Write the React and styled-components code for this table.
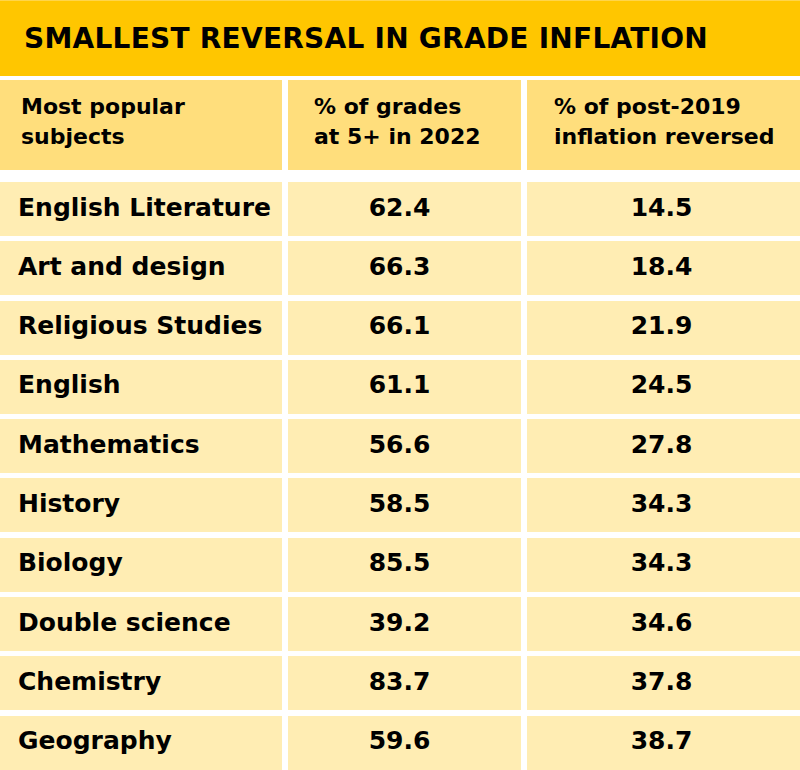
import React from 'react'
import styled, { createGlobalStyle } from 'styled-components'

const titleYellow = '#ffc600'
const headYellow = '#ffde7c'
const bodyYellow = '#ffedb3'

const GlobalStyle = createGlobalStyle`
  html, body {
    margin: 0;
    padding: 0;
    background: #ffffff;
  }
  body {
    font-family: "DejaVu Sans", "Open Sans", sans-serif;
    color: #000000;
  }
`

const Page = styled.div`
  width: 800px;
`

const TitleBar = styled.div`
  height: 76px;
  background: ${titleYellow};
  border-top: 1px solid #ffd54a;
  box-sizing: border-box;
  display: flex;
  align-items: center;
  padding-left: 24px;
  margin-bottom: 4px;
`

const Title = styled.h1`
  margin: 0;
  font-size: 28px;
  font-weight: 700;
  letter-spacing: 0.25px;
  text-transform: uppercase;
`

const Columns = styled.div`
  display: grid;
  grid-template-columns: 282px 233px 273px;
  column-gap: 6px;
`

const HeadRow = styled(Columns)`
  height: 90px;
  margin-bottom: 12px;
`

const BodyRows = styled(Columns)`
  grid-auto-rows: 54px;
  row-gap: 5.3px;
`

const HeadCell = styled.div`
  background: ${headYellow};
  display: flex;
  align-items: center;
  padding-left: ${p => p.pad}px;
  padding-bottom: 7px;
  font-size: 22px;
  font-weight: 700;
  line-height: 30px;
`

const Cell = styled.div`
  background: ${bodyYellow};
  display: flex;
  align-items: center;
  justify-content: ${p => (p.shift !== undefined ? 'center' : 'flex-start')};
  padding-left: ${p => (p.shift !== undefined ? 0 : 18)}px;
  padding-right: ${p => p.shift || 0}px;
  padding-bottom: 4px;
  font-size: 25px;
  font-weight: 700;
`

const rows = [
  ['English Literature', '62.4', '14.5'],
  ['Art and design', '66.3', '18.4'],
  ['Religious Studies', '66.1', '21.9'],
  ['English', '61.1', '24.5'],
  ['Mathematics', '56.6', '27.8'],
  ['History', '58.5', '34.3'],
  ['Biology', '85.5', '34.3'],
  ['Double science', '39.2', '34.6'],
  ['Chemistry', '83.7', '37.8'],
  ['Geography', '59.6', '38.7']
]

export default function App () {
  return (
    <Page>
      <GlobalStyle />
      <TitleBar>
        <Title>Smallest reversal in grade inflation</Title>
      </TitleBar>
      <HeadRow>
        <HeadCell pad={21}>Most popular<br />subjects</HeadCell>
        <HeadCell pad={26}>% of grades<br />at 5+ in 2022</HeadCell>
        <HeadCell pad={27}>% of post-2019<br />inflation reversed</HeadCell>
      </HeadRow>
      <BodyRows>
        {rows.map(([subject, share, reversed]) => (
          <React.Fragment key={subject}>
            <Cell>{subject}</Cell>
            <Cell shift={10}>{share}</Cell>
            <Cell shift={4}>{reversed}</Cell>
          </React.Fragment>
        ))}
      </BodyRows>
    </Page>
  )
}
